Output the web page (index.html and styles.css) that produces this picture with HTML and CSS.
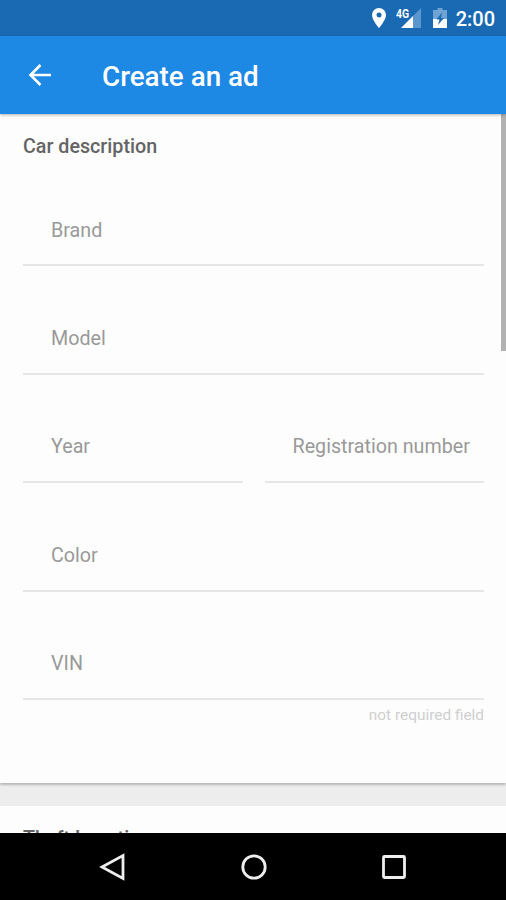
FILE: index.html
```
<!DOCTYPE html>
<html lang="en">
<head>
  <meta charset="UTF-8">
  <meta name="viewport" content="width=device-width, initial-scale=1.0">
  <title>Create an ad</title>
  <link rel="stylesheet" href="styles.css">
</head>
<body>
  <div class="status-bar">
    <svg class="icon-pin" width="14" height="20" viewBox="0 0 14 20">
      <path fill="#fff" fill-rule="evenodd" d="M7 0a7 7 0 0 0-7 7c0 5 7 13 7 13s7-8 7-13a7 7 0 0 0-7-7zm0 4.500a2.500 2.500 0 1 1 0 5 2.500 2.500 0 0 1 0-5z"/>
    </svg>
    <div class="signal">
      <svg width="20" height="20" viewBox="0 0 20 20">
        <path fill="#5b96cc" d="M12 8l8-8v20h-8z"/>
        <path fill="#fff" d="M12 8v12H0z"/>
      </svg>
      <span class="network">4G</span>
    </div>
    <svg class="icon-battery" width="14" height="20" viewBox="0 0 14 20">
      <path fill="#6fa3d3" d="M4.500 0h5v2H14v9H0V2h4.500z"/>
      <path fill="#fff" d="M0 11h14v9H0z"/>
      <path fill="#1a69b3" d="M9 4.500 3.500 11.500H6.500L5 17l6-7H8z"/>
    </svg>
    <span class="clock">2:00</span>
  </div>

  <header class="app-bar">
    <svg width="24" height="24" viewBox="0 0 24 24" fill="none" stroke="#fff" stroke-width="2.600">
      <path d="M23 12H3M12.500 2 2.500 12l10 10"/>
    </svg>
    <h1>Create an ad</h1>
  </header>

  <main class="content">
    <section class="card">
      <h2>Car description</h2>
      <div class="field">Brand</div>
      <div class="field">Model</div>
      <div class="row">
        <div class="field">Year</div>
        <div class="field">Registration number</div>
      </div>
      <div class="field">Color</div>
      <div class="field">VIN</div>
      <p class="hint">not required field</p>
    </section>
    <section class="card">
      <h2>Theft Location</h2>
    </section>
    <div class="scrollbar"></div>
  </main>

  <nav class="nav-bar">
    <svg width="28" height="28" viewBox="0 0 28 28"><path d="M24 2.500v23L3 14z"/></svg>
    <svg width="28" height="28" viewBox="0 0 28 28"><circle cx="14" cy="14" r="11.200"/></svg>
    <svg width="28" height="28" viewBox="0 0 28 28"><rect x="3.500" y="3.500" width="21" height="21" rx="1"/></svg>
  </nav>
</body>
</html>
```

FILE: styles.css
```
* { box-sizing: border-box; }
body { margin: 0; height: 900px; display: flex; flex-direction: column; overflow: hidden; font-family: Roboto, sans-serif; background: #ededed; }
h1, h2, p { margin: 0; }
svg { display: block; flex: none; }

.status-bar { height: 36px; flex: none; display: flex; align-items: center; padding: 0 11px 0 0; justify-content: flex-end; background: #1a69b3; color: #fff; }
.icon-pin { margin-right: 15px; }
.signal { position: relative; margin-right: 12px; }
.network { position: absolute; left: -5px; top: -1px; font-size: 13px; line-height: 13px; font-weight: 700; transform: scaleX(0.8); transform-origin: left; }
.icon-battery { margin-right: 9px; }
.clock { font-size: 20px; font-weight: 500; line-height: 36px; padding-top: 2px; }

.app-bar { position: relative; z-index: 1; height: 78px; flex: none; display: flex; align-items: center; padding-left: 28px; background: #1e88e5; color: #fff; box-shadow: 0 1px 3px rgba(0, 0, 0, 0.3); }
.app-bar h1 { margin-left: 50px; padding-top: 4px; font-size: 27.800px; font-weight: 500; line-height: 36px; }

.content { position: relative; flex: 1; min-height: 0; overflow: hidden; }
.card { height: 669px; margin-bottom: 23px; padding: 21px 22px 0 23px; background: #fdfdfd; box-shadow: 0 2px 2px rgba(0, 0, 0, 0.22); }
.card h2 { height: 23px; line-height: 23px; font-size: 19.700px; font-weight: 500; color: #646464; }
.field { height: 108.400px; padding: 60.600px 0 0 28px; border-bottom: 2px solid #e6e6e6; font-size: 19.700px; line-height: 24px; color: #999; white-space: nowrap; }
.row { display: flex; gap: 22px; }
.row .field { flex: 1; min-width: 0; }
.hint { padding-top: 5px; text-align: right; font-size: 15.400px; line-height: 20px; color: #cfcfcf; }
.scrollbar { position: absolute; top: 0; right: 0; width: 5px; height: 237px; background: #b2b2b2; }

.nav-bar { height: 67px; flex: none; display: flex; justify-content: center; align-items: center; gap: 112.500px; padding-left: 1px; background: #000; }
.nav-bar svg { fill: none; stroke: #eee; stroke-width: 2.800; }
```
